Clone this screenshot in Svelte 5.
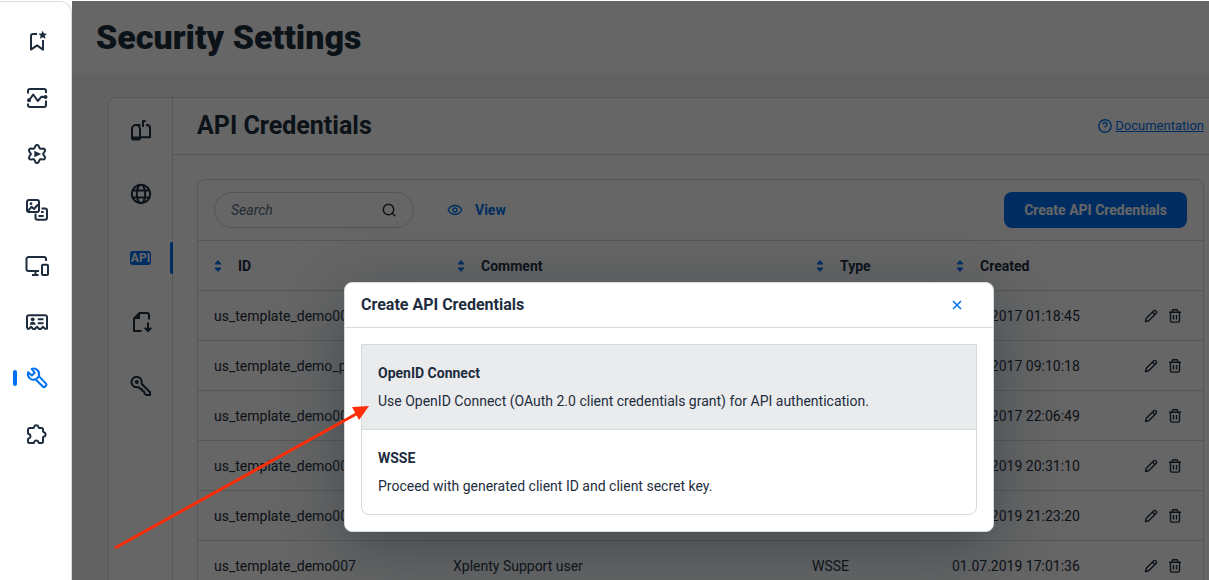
<script>
  const navItems = [
    { id: 'bookmarks', label: 'Bookmarks' },
    { id: 'analytics', label: 'Analytics' },
    { id: 'automation', label: 'Automation' },
    { id: 'content', label: 'Content' },
    { id: 'channels', label: 'Channels' },
    { id: 'contacts', label: 'Contacts' },
    { id: 'management', label: 'Management', active: true },
    { id: 'addons', label: 'Add-ons' }
  ];

  const tabs = [
    { id: 'mailbox', label: 'Mailbox' },
    { id: 'globe', label: 'Domains' },
    { id: 'api', label: 'API Credentials', active: true },
    { id: 'file', label: 'Exports' },
    { id: 'key', label: 'Keys' }
  ];

  const columns = ['ID', 'Comment', 'Type', 'Created'];

  const rows = [
    { id: 'us_template_demo001', comment: '', type: 'WSSE', created: '03.04.2017 01:18:45' },
    { id: 'us_template_demo_p', comment: '', type: 'WSSE', created: '12.05.2017 09:10:18' },
    { id: 'us_template_demo003', comment: '', type: 'WSSE', created: '20.06.2017 22:06:49' },
    { id: 'us_template_demo004', comment: '', type: 'WSSE', created: '14.02.2019 20:31:10' },
    { id: 'us_template_demo005', comment: '', type: 'WSSE', created: '18.03.2019 21:23:20' },
    { id: 'us_template_demo007', comment: 'Xplenty Support user', type: 'WSSE', created: '01.07.2019 17:01:36' }
  ];

  const options = [
    {
      title: 'OpenID Connect',
      text: 'Use OpenID Connect (OAuth 2.0 client credentials grant) for API authentication.',
      highlighted: true
    },
    { title: 'WSSE', text: 'Proceed with generated client ID and client secret key.' }
  ];

  // Six-lobed gear outline around the centre of a 24 unit box
  const gear =
    Array.from({ length: 60 }, (_, i) => {
      const a = (i / 60) * Math.PI * 2;
      const r = 7.6 + 1.5 * Math.cos(6 * a);
      return `${i ? 'L' : 'M'}${(12 + r * Math.sin(a)).toFixed(2)} ${(12 - r * Math.cos(a)).toFixed(2)}`;
    }).join('') + 'Z';
</script>

<div class="shell">
  <nav class="sidebar" aria-label="Main">
    {#each navItems as item}
      <a href="#{item.id}" class="nav-link" class:active={item.active} aria-label={item.label}>
        <svg class="icon" viewBox="0 0 24 24" aria-hidden="true">
          {#if item.id === 'bookmarks'}
            <path d="M12 4H8a2 2 0 0 0-2 2v13.600l6-4.200 6 4.200V10" />
            <path class="solid" d="m17.700.7 1.300 2.700 3 .4-2.200 2 .6 3-2.700-1.500L15 8.800l.6-3-2.200-2 3-.4z" />
          {:else if item.id === 'analytics'}
            <path d="M3 7.500V5a2 2 0 0 1 2-2h14a2 2 0 0 1 2 2v2M3 17.500V19a2 2 0 0 0 2 2h14a2 2 0 0 0 2-2v-4.500" />
            <path d="M4 14.500 8.200 8.500l4.600 6.500L16.500 10.700 21 11" />
            <circle class="solid" cx="4" cy="14.300" r="2" /><circle class="solid" cx="20.600" cy="11" r="1.900" />
          {:else if item.id === 'automation'}
            <path d={gear} />
            <path class="solid" d="M9.300 8.800v6.400l7-3.200z" />
          {:else if item.id === 'content'}
            <rect x="2" y="2" width="12" height="12" rx="2" />
            <path d="m3 13 3.500-4.200L9 11l4-4.500" />
            <circle class="solid" cx="6" cy="5.700" r="1.400" />
            <path d="M10.500 15.500v4.200a2 2 0 0 0 2 2h7.500a2 2 0 0 0 2-2v-7.200a2 2 0 0 0-2-2h-3.500M16 14h2.600M13.500 17.900h5.200" />
          {:else if item.id === 'channels'}
            <path d="M14 17H3.500a2 2 0 0 1-2-2V5a2 2 0 0 1 2-2h15.500a2 2 0 0 1 2 2v2M10.500 17v4M7 21h6.500" />
            <rect x="17" y="10.700" width="6" height="10.300" rx="1" />
            <path d="M20 20h.1" />
          {:else if item.id === 'contacts'}
            <path d="M2 18.500V7a1.800 1.800 0 0 1 1.800-1.800h16.400A1.800 1.800 0 0 1 22 7v11.700h-2.300l-1.700-2-2.200 2.300h-1.600L12 16.700 9.800 19H8.200L6 16.700l-2 2H2" />
            <circle class="solid" cx="7.700" cy="9.300" r="1.900" />
            <path class="solid" d="M4.800 14.700c0-1.900 1.200-2.900 2.900-2.900s2.900 1 2.900 2.900z" />
            <path d="M12.800 9.200h5.700M12.800 13.300h5.700" />
          {:else if item.id === 'management'}
            <path d="M6.600 2.900a5.600 5.600 0 0 1 7.200 7.200l7 7.300a1.800 1.800 0 0 1 0 2.500l-.6.600a1.800 1.800 0 0 1-2.500 0l-7.200-7.200A5.600 5.600 0 0 1 3.200 6.200l3.600 3.300 2.900-2.900z" />
            <path d="m11.300 13 2.300-2.300" />
          {:else}
            <path d="M5 6h3.200c.6 0 .8-.4.900-1a2.300 2.300 0 0 1 4.400 0c.1.600.4 1 1 1h2a1.500 1.500 0 0 1 1.500 1.500V9.200c0 .6.400.9 1 1a2.300 2.300 0 0 1 0 4.400c-.6.100-1 .4-1 1v3.900a1.500 1.500 0 0 1-1.500 1.500h-2.200c-.6 0-.7-.3-.8-.8a2.300 2.300 0 0 0-4.400 0c-.1.500-.3.800-.8.800H4.500A1.500 1.500 0 0 1 3 19.500v-2.200c0-.6.300-.8.800-.9a2.200 2.200 0 0 0 0-4.300c-.5-.1-.8-.4-.8-.9V8a2 2 0 0 1 2-2z" />
          {/if}
        </svg>
      </a>
    {/each}
  </nav>

  <main class="main">
    <header class="page-header"><h1>Security Settings</h1></header>

    <div class="panel">
      <nav class="tabs" aria-label="Security">
        {#each tabs as tab}
          <a href="#{tab.id}" class="tab" class:active={tab.active} aria-label={tab.label}>
            {#if tab.id === 'api'}
              <span class="api-badge">API</span>
            {:else}
              <svg class="icon" viewBox="0 0 24 24" aria-hidden="true">
                {#if tab.id === 'mailbox'}
                  <path d="M3 11a4 4 0 0 1 4-4h0a4 4 0 0 1 4 4v9a1.500 1.500 0 0 1-1.500 1.500H4.500A1.500 1.500 0 0 1 3 20zM3 19.500h8M7 7h4.500M11 19.300h10V10a3 3 0 0 0-3-3h-1" />
                  <path d="M14 9V3h2.500" />
                {:else if tab.id === 'globe'}
                  <circle cx="12" cy="12" r="9.200" />
                  <ellipse cx="12" cy="12" rx="4.200" ry="9.200" />
                  <path d="M4 8.500h16M4 15.500h16" />
                {:else if tab.id === 'file'}
                  <path d="M12.500 21H5V8.500L10.500 3H18a2 2 0 0 1 2 2v4.500M19 12.500V21m-3.200-3.200L19 21l3.200-3.200" />
                  <path class="solid" d="M4.500 9 11 2.500V9z" />
                {:else}
                  <path d="M12.600 9.700A5.200 5.200 0 1 0 9.300 13l1.900 1.800 1.600.2.400 1.900 1.900.5.400 1.900 1.500 1.600h4v-2.700z" />
                  <circle class="solid" cx="7.800" cy="8" r="1.900" />
                {/if}
              </svg>
            {/if}
          </a>
        {/each}
      </nav>

      <section class="content">
        <header class="content-header">
          <h2>API Credentials</h2>
          <a class="doc-link" href="#documentation">
            <svg class="icon-sm" viewBox="0 0 16 16" aria-hidden="true">
              <circle cx="8" cy="8" r="6.200" />
              <path d="M6 6.500a2 2 0 1 1 3 1.700c-.7.400-1 .7-1 1.300M8 11.300v.2" />
            </svg>
            <span>Documentation</span>
          </a>
        </header>

        <div class="table-card">
          <div class="toolbar">
            <label class="search">
              <input type="text" placeholder="Search" aria-label="Search" />
              <svg class="icon-sm" viewBox="0 0 16 16" aria-hidden="true">
                <circle cx="7.500" cy="7.500" r="5.200" /><path d="m11.500 11.500 2.800 2.800" />
              </svg>
            </label>
            <button type="button" class="view">
              <svg class="icon-sm" viewBox="0 0 16 16" aria-hidden="true">
                <path d="M1.200 8C2.600 5.200 5 3.500 8 3.500s5.400 1.700 6.800 4.500c-1.400 2.800-3.800 4.500-6.800 4.500S2.600 10.800 1.200 8z" />
                <circle cx="8" cy="8" r="2" />
              </svg>
              View
            </button>
            <button type="button" class="primary">Create API Credentials</button>
          </div>

          <table>
            <colgroup>
              <col class="col-id" /><col /><col class="col-type" /><col class="col-created" /><col class="col-actions" />
            </colgroup>
            <thead>
              <tr>
                {#each columns as column}
                  <th scope="col">
                    <button type="button" class="sort">
                      <svg viewBox="0 0 16 16" aria-hidden="true">
                        <path d="M5 6 8 2.600 11 6zM5 10h6l-3 3.400z" />
                      </svg>
                      {column}
                    </button>
                  </th>
                {/each}
                <th></th>
              </tr>
            </thead>
            <tbody>
              {#each rows as row}
                <tr>
                  <td>{row.id}</td>
                  <td>{row.comment}</td>
                  <td>{row.type}</td>
                  <td>{row.created}</td>
                  <td>
                    <div class="actions">
                      <button type="button" aria-label="Edit">
                        <svg class="icon-sm" viewBox="0 0 16 16" aria-hidden="true">
                          <path d="m2.500 13.500.8-3.200 7.500-7.500a1.300 1.300 0 0 1 1.900 0l.5.500a1.300 1.300 0 0 1 0 1.900l-7.500 7.500zM9.500 4.200l2.300 2.300" />
                        </svg>
                      </button>
                      <button type="button" aria-label="Delete">
                        <svg class="icon-sm" viewBox="0 0 16 16" aria-hidden="true">
                          <path d="M2 4.300h12M5.300 4V2.800a1 1 0 0 1 1-1h3.400a1 1 0 0 1 1 1V4M3.500 4.500v8.300a1.300 1.300 0 0 0 1.300 1.300h6.400a1.300 1.300 0 0 0 1.300-1.300V4.500M6.500 7v4.500M9.500 7v4.500" />
                        </svg>
                      </button>
                    </div>
                  </td>
                </tr>
              {/each}
            </tbody>
          </table>
        </div>
      </section>
    </div>

    <div class="overlay">
      <div class="dialog" role="dialog" aria-modal="true" aria-labelledby="dialog-title">
        <header class="dialog-header">
          <h3 id="dialog-title">Create API Credentials</h3>
          <button type="button" class="close" aria-label="Close">
            <svg viewBox="0 0 16 16" aria-hidden="true"><path d="m4 4 8 8M12 4l-8 8" /></svg>
          </button>
        </header>
        <div class="dialog-body">
          <div class="options">
            {#each options as option}
              <button type="button" class="option" class:highlighted={option.highlighted}>
                <strong>{option.title}</strong>
                <span>{option.text}</span>
              </button>
            {/each}
          </div>
        </div>
      </div>
    </div>
  </main>

  <svg class="pointer" viewBox="0 0 256 146" aria-hidden="true">
    <path d="M1 144 244 9" fill="none" stroke="#ff2d08" stroke-width="3" />
    <path d="M255 2 238 3l7 13z" fill="#ff2d08" />
  </svg>
</div>

<style>
  :global(body) {
    margin: 0;
    background: #fff;
  }

  .shell {
    position: relative;
    display: flex;
    height: 100vh;
    padding-top: 1px;
    box-sizing: border-box;
    overflow: hidden;
    color: #1d2d3e;
    font: 14px/20px Roboto, 'Noto Sans', sans-serif;
  }

  .shell * {
    box-sizing: border-box;
  }

  h1,
  h2,
  h3 {
    margin: 0;
  }

  button {
    padding: 0;
    border: 0;
    background: none;
    color: inherit;
    font: inherit;
    cursor: pointer;
  }

  svg {
    display: block;
    flex: none;
  }

  .icon,
  .icon-sm {
    width: 24px;
    height: 24px;
    fill: none;
    stroke: currentColor;
    stroke-width: 2;
    stroke-linejoin: round;
  }

  .icon-sm {
    width: 16px;
    height: 16px;
    stroke-width: 1.4;
  }

  .icon .solid {
    fill: currentColor;
    stroke: none;
  }

  .sidebar {
    display: flex;
    flex: none;
    flex-direction: column;
    gap: 32px;
    width: 72px;
    padding-top: 28px;
    border: solid #d9dfdf;
    border-width: 1px 1px 0 0;
    border-top-right-radius: 12px;
    background: #fff;
  }

  .nav-link {
    position: relative;
    display: flex;
    justify-content: center;
    padding-left: 2px;
    color: #1d2d3e;
  }

  .nav-link.active {
    color: #0070f2;
  }

  .nav-link.active::before {
    position: absolute;
    top: 4px;
    left: 13px;
    width: 4px;
    height: 16px;
    border-radius: 2px;
    background: #0070f2;
    content: '';
  }

  .main {
    position: relative;
    display: flex;
    flex: 1;
    flex-direction: column;
    min-width: 0;
    background: #f5f6f7;
  }

  .page-header {
    flex: none;
    padding: 16px 24px;
    background: #fff;
  }

  h1 {
    font-size: 34px;
    font-weight: 900;
    line-height: 40px;
  }

  .panel {
    display: flex;
    flex: none;
    margin: 24px 0 0 36px;
    border: solid #d9d9d9;
    border-width: 1px 0 0 1px;
    border-top-left-radius: 8px;
    background: #fff;
  }

  .tabs {
    display: flex;
    flex: none;
    flex-direction: column;
    gap: 32px;
    width: 64px;
    padding-top: 16px;
    border-right: 1px solid #d9d9d9;
  }

  .tab {
    position: relative;
    display: flex;
    justify-content: center;
    align-items: center;
    height: 32px;
    color: #1d2d3e;
    text-decoration: none;
  }

  .tab.active::after {
    position: absolute;
    top: 0;
    right: -1px;
    width: 3px;
    height: 32px;
    border-radius: 2px 0 0 2px;
    background: #0070f2;
    content: '';
  }

  .api-badge {
    padding: 0 1px;
    border-radius: 3px;
    background: #0070f2;
    color: #fff;
    font-size: 12px;
    font-weight: 700;
    line-height: 14px;
  }

  .content {
    flex: 1;
    min-width: 0;
  }

  .content-header {
    display: flex;
    justify-content: space-between;
    align-items: center;
    padding: 12px 5px 12px 24px;
    border-bottom: 1px solid #d9d9d9;
  }

  h2 {
    font-size: 25px;
    font-weight: 700;
    line-height: 32px;
  }

  .doc-link {
    display: flex;
    align-items: center;
    gap: 2px;
    color: #0070f2;
    font-size: 13px;
  }

  .table-card {
    margin: 24px 5px 0 24px;
    border: 1px solid #d9d9d9;
    border-radius: 8px;
  }

  .toolbar {
    display: flex;
    align-items: center;
    padding: 12px 16px;
  }

  .search {
    display: flex;
    align-items: center;
    width: 200px;
    height: 36px;
    padding: 0 16px;
    border: 1px solid #d0d4d9;
    border-radius: 18px;
  }

  .search input {
    flex: 1;
    min-width: 0;
    padding: 0;
    border: 0;
    outline: 0;
    background: none;
    color: inherit;
    font: inherit;
  }

  .search input::placeholder {
    color: #556b82;
    font-style: italic;
    opacity: 1;
  }

  .view {
    display: flex;
    align-items: center;
    gap: 12px;
    margin-left: 33px;
    color: #0070f2;
    font-weight: 700;
  }

  .primary {
    height: 36px;
    margin-left: auto;
    padding: 0 20px;
    border-radius: 8px;
    background: #0070f2;
    color: #fff;
    font-weight: 700;
  }

  table {
    width: 100%;
    border-spacing: 0;
    table-layout: fixed;
  }

  .col-id {
    width: 239px;
  }

  .col-type {
    width: 140px;
  }

  .col-created {
    width: 191px;
  }

  .col-actions {
    width: 76px;
  }

  th,
  td {
    height: 50px;
    padding: 0 0 0 16px;
    border-top: 1px solid #d9d9d9;
    text-align: left;
    white-space: nowrap;
  }

  th:first-child {
    padding-left: 12px;
  }

  .sort {
    display: flex;
    align-items: center;
    gap: 12px;
    font-weight: 700;
  }

  .sort svg {
    width: 16px;
    height: 16px;
    fill: #0070f2;
    stroke: #0070f2;
    stroke-linejoin: round;
  }

  .actions {
    display: flex;
    gap: 8px;
  }

  .overlay {
    position: absolute;
    inset: 0;
    display: flex;
    justify-content: center;
    align-items: flex-start;
    padding: 281px 0 0 57px;
    overflow: hidden;
    background: rgba(0, 0, 0, 0.6);
  }

  .dialog {
    width: 650px;
    max-width: 100%;
    border: 1px solid #d5dadd;
    border-radius: 8px;
    background: #fff;
    box-shadow: 0 16px 64px rgba(34, 45, 56, 0.5);
  }

  .dialog-header {
    display: flex;
    justify-content: space-between;
    align-items: center;
    height: 45px;
    padding: 0 28px 0 16px;
    border-bottom: 1px solid #d5dadd;
  }

  h3 {
    font-size: 16px;
    font-weight: 700;
    line-height: 24px;
  }

  .close svg {
    width: 16px;
    height: 16px;
    fill: none;
    stroke: #0070f2;
    stroke-width: 1.5;
  }

  .dialog-body {
    padding: 16px;
  }

  .options {
    border: 1px solid #d5dadd;
    border-radius: 0 0 8px 8px;
  }

  .option {
    display: flex;
    flex-direction: column;
    gap: 4px;
    width: 100%;
    padding: 16px;
    line-height: 24px;
    text-align: left;
  }

  .option + .option {
    border-top: 1px solid #d5dadd;
  }

  .option.highlighted {
    background: #eaebed;
  }

  .pointer {
    position: absolute;
    top: 404px;
    left: 114px;
    width: 256px;
    height: 146px;
    pointer-events: none;
  }
</style>
